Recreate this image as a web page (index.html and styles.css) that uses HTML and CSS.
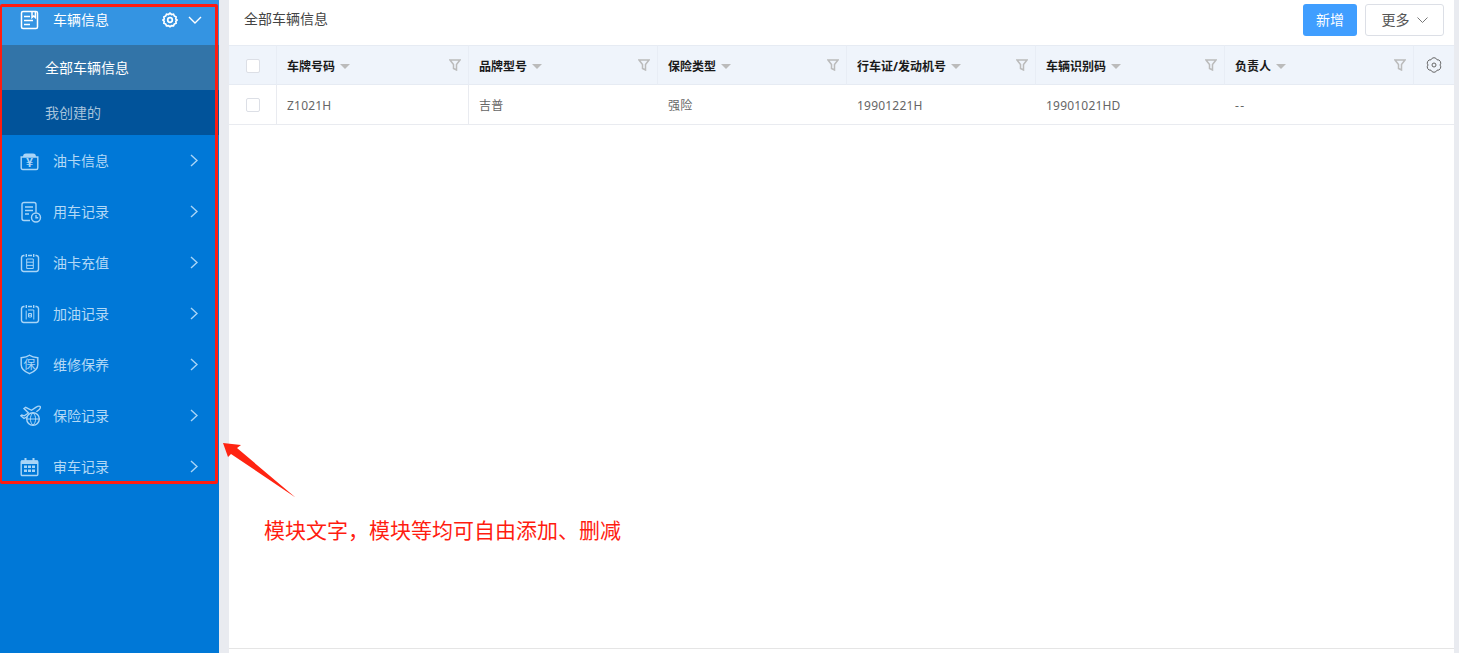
FILE: index.html
```html
<!DOCTYPE html>
<html lang="zh-CN">
<head>
<meta charset="utf-8">
<title>全部车辆信息</title>
<link rel="stylesheet" href="styles.css">
</head>
<body>
<aside class="sidebar">
  <div class="menu">
    <div class="row row-open">
      <span class="ico"><svg width="20" height="20" viewBox="0 0 20 20"><rect x="1.500" y="1.500" width="16" height="17" rx="1.500"/><path d="M4 6.500h6M4 10.500h9M4 14.500h6M12 1.500v6l1.700-1.500 1.700 1.500v-6"/></svg></span>
      <span class="label">车辆信息</span>
      <svg class="gear" width="16" height="16" viewBox="0 0 16 16"><path d="M8 1.200l1.500 1.300 2-.3.8 1.800 1.800.9-.3 2L15 8l-1.200 1.300.3 1.900-1.800.9-.8 1.800-2-.2L8 14.800l-1.500-1.100-2 .2-.8-1.800-1.800-.9.3-1.900L1 8l1.200-1.100-.3-2 1.800-.9.800-1.800 2 .3z"/><circle cx="8" cy="8" r="2.300"/></svg>
      <svg class="chev-down" width="14" height="8" viewBox="0 0 14 8"><path d="M1 1l6 6 6-6"/></svg>
    </div>
    <div class="sub sub-active">全部车辆信息</div>
    <div class="sub sub-idle">我创建的</div>

    <div class="row">
      <span class="ico"><svg width="20" height="20" viewBox="0 0 20 20"><path class="ico-fill" d="M3 6c0-2.500 1-3.500 3-3.500h7c2 0 3 1 3 3.500z"/><path d="M1.200 6h16.600v11a1.500 1.500 0 0 1-1.500 1.500H2.700a1.500 1.500 0 0 1-1.500-1.500z"/><text x="9.500" y="16.200" class="ico-text">¥</text></svg></span>
      <span class="label">油卡信息</span>
      <svg class="chev" width="8" height="13" viewBox="0 0 8 13"><path d="M1 1l6 5.500-6 5.500"/></svg>
    </div>
    <div class="row">
      <span class="ico"><svg width="22" height="22" viewBox="0 0 22 22"><path d="M10 19.500H4a2 2 0 0 1-2-2V3.500a2 2 0 0 1 2-2h10a2 2 0 0 1 2 2v8"/><path d="M5 6h8M5 9.500h8M5 13h4"/><circle cx="16" cy="16.500" r="4.500"/><path d="M16 14v2.700h2.200"/></svg></span>
      <span class="label">用车记录</span>
      <svg class="chev" width="8" height="13" viewBox="0 0 8 13"><path d="M1 1l6 5.500-6 5.500"/></svg>
    </div>
    <div class="row">
      <span class="ico"><svg width="20" height="20" viewBox="0 0 20 20"><path d="M4.500 2.500H3.500a2.500 2.500 0 0 0-2 2v12a2.500 2.500 0 0 0 2 2h13a2.500 2.500 0 0 0 2-2v-12a2.500 2.500 0 0 0-2-2h-1M8 2.500h4M6.300 1v3M13.700 1v3"/><path class="ico-thin" d="M6.700 6h6.600v9.500H6.700zM6.700 9.200h6.600M6.700 12.400h6.600"/></svg></span>
      <span class="label">油卡充值</span>
      <svg class="chev" width="8" height="13" viewBox="0 0 8 13"><path d="M1 1l6 5.500-6 5.500"/></svg>
    </div>
    <div class="row">
      <span class="ico"><svg width="20" height="20" viewBox="0 0 20 20"><path d="M4.500 2.500H3.500a2.500 2.500 0 0 0-2 2v12a2.500 2.500 0 0 0 2 2h13a2.500 2.500 0 0 0 2-2v-12a2.500 2.500 0 0 0-2-2h-1M8 2.500h4M6.300 1v3M13.700 1v3"/><path class="ico-thin" d="M6.200 15.500V6.500M8 6h5.800v9.500M8.500 9.500h3v3.500h-3zM8.500 11.200h3"/></svg></span>
      <span class="label">加油记录</span>
      <svg class="chev" width="8" height="13" viewBox="0 0 8 13"><path d="M1 1l6 5.500-6 5.500"/></svg>
    </div>
    <div class="row">
      <span class="ico"><svg width="20" height="21" viewBox="0 0 20 21"><path d="M9.500 1.200c2 1.500 5 2.300 8.300 2.500v7c0 4-3.500 7-8.300 9-4.800-2-8.300-5-8.300-9v-7c3.300-.2 6.300-1 8.300-2.500z"/><text x="9.500" y="15" class="ico-text ico-text-big">保</text></svg></span>
      <span class="label">维修保养</span>
      <svg class="chev" width="8" height="13" viewBox="0 0 8 13"><path d="M1 1l6 5.500-6 5.500"/></svg>
    </div>
    <div class="row">
      <span class="ico"><svg width="21" height="21" viewBox="0 0 21 21"><path d="M7.500 11.500L4 13.500 .8 10.800l1-.8 2.500.8 4.200-2.800L4 3.500l1.700-1.200 5.800 3 4.300-2.900c1.500-.9 3.800-1.400 4.400-.8.600.7-.2 2.500-1.800 3.700l-2 1.500"/><circle cx="13" cy="14" r="6.300"/><path class="ico-thin" d="M6.700 14h12.600M13 7.700c-3.500 3.500-3.500 9 0 12.600M13 7.700c3.500 3.500 3.500 9 0 12.600"/></svg></span>
      <span class="label">保险记录</span>
      <svg class="chev" width="8" height="13" viewBox="0 0 8 13"><path d="M1 1l6 5.500-6 5.500"/></svg>
    </div>
    <div class="row">
      <span class="ico"><svg width="20" height="20" viewBox="0 0 20 20"><path class="ico-fill" d="M1 3.500h3.500V1h2v2.500h6V1h2v2.500H18V7H1z"/><rect x="1.200" y="4" width="16.600" height="14.500" rx="1"/><path class="ico-fill" d="M4 8.500h3V11H4zM8 8.500h3V11H8zM12 8.500h3V11h-3zM4 12.500h3V15H4zM8 12.500h3V15H8zM12 12.500h3V15h-3z"/></svg></span>
      <span class="label">审车记录</span>
      <svg class="chev" width="8" height="13" viewBox="0 0 8 13"><path d="M1 1l6 5.500-6 5.500"/></svg>
    </div>
  </div>
</aside>

<main class="main">
  <header class="topbar">
    <h1 class="title">全部车辆信息</h1>
    <div class="actions">
      <button class="btn btn-primary">新增</button>
      <button class="btn btn-more">更多<svg width="11" height="6" viewBox="0 0 11 6"><path d="M.5.500l5 5 5-5"/></svg></button>
    </div>
  </header>

  <div class="table">
    <div class="cell head center b-r"><span class="check"></span></div>
    <div class="cell head b-r"><span class="th">车牌号码</span><i class="caret"></i><svg class="filter" width="12" height="12" viewBox="0 0 12 12"><path d="M1 1h10L7.500 5.500V11l-3-1.500v-4z"/></svg></div>
    <div class="cell head b-r"><span class="th">品牌型号</span><i class="caret"></i><svg class="filter" width="12" height="12" viewBox="0 0 12 12"><path d="M1 1h10L7.500 5.500V11l-3-1.500v-4z"/></svg></div>
    <div class="cell head b-r"><span class="th">保险类型</span><i class="caret"></i><svg class="filter" width="12" height="12" viewBox="0 0 12 12"><path d="M1 1h10L7.500 5.500V11l-3-1.500v-4z"/></svg></div>
    <div class="cell head b-r"><span class="th">行车证/发动机号</span><i class="caret"></i><svg class="filter" width="12" height="12" viewBox="0 0 12 12"><path d="M1 1h10L7.500 5.500V11l-3-1.500v-4z"/></svg></div>
    <div class="cell head b-r"><span class="th">车辆识别码</span><i class="caret"></i><svg class="filter" width="12" height="12" viewBox="0 0 12 12"><path d="M1 1h10L7.500 5.500V11l-3-1.500v-4z"/></svg></div>
    <div class="cell head b-r"><span class="th">负责人</span><i class="caret"></i><svg class="filter" width="12" height="12" viewBox="0 0 12 12"><path d="M1 1h10L7.500 5.500V11l-3-1.500v-4z"/></svg></div>
    <div class="cell head center"><svg class="head-gear" width="16" height="16" viewBox="0 0 16 16"><path d="M14 8A3.200 3.200 0 0 1 11 13.200A3.200 3.200 0 0 1 5 13.200A3.200 3.200 0 0 1 2 8A3.200 3.200 0 0 1 5 2.800A3.200 3.200 0 0 1 11 2.800A3.200 3.200 0 0 1 14 8z"/><circle cx="8" cy="8" r="2"/></svg></div>

    <div class="cell body center b-r"><span class="check"></span></div>
    <div class="cell body b-r">Z1021H</div>
    <div class="cell body">吉普</div>
    <div class="cell body">强险</div>
    <div class="cell body">19901221H</div>
    <div class="cell body">19901021HD</div>
    <div class="cell body dash">--</div>
    <div class="cell body"></div>
  </div>

  <div class="spacer"></div>
  <div class="foot"></div>
</main>

<div class="red-box"></div>
<svg class="red-arrow" width="80" height="62" viewBox="0 0 80 62"><polygon points="0,1 18,3 14,6 72.500,55.500 8,12 5,15"/></svg>
<p class="note">模块文字，模块等均可自由添加、删减</p>
</body>
</html>
```

FILE: styles.css
```css
* { box-sizing: border-box; }

html, body { height: 100%; }

body {
  margin: 0;
  display: flex;
  height: 653px;
  overflow: hidden;
  background: #e9ebf0;
  font-family: "Noto Sans", "Noto Sans CJK SC", sans-serif;
  position: relative;
}

.sidebar {
  width: 219px;
  flex: none;
  background: #0078d7;
  overflow: hidden;
}

.menu {
  margin-top: -6px;
}

.row {
  height: 51px;
  display: flex;
  align-items: center;
  padding: 0 21px 0 20px;
  color: #b3d9f6;
  font-size: 14px;
}

.row-open {
  background: #3494e2;
  color: #fff;
  padding-right: 17px;
}

.ico {
  width: 33px;
  flex: none;
  display: flex;
  align-items: center;
}

.ico svg {
  fill: none;
  stroke: #a9d5f7;
  stroke-width: 1.4;
  display: block;
}

.row-open .ico svg { stroke: #fff; stroke-width: 1.5; }

.ico svg .ico-thin { stroke-width: 1; }

.ico svg .ico-text {
  fill: #a9d5f7;
  stroke: none;
  font-size: 12px;
  font-weight: 700;
  font-family: "Noto Sans CJK SC", sans-serif;
  text-anchor: middle;
}

.ico svg .ico-text-big { font-size: 12px; font-weight: 400; }

.ico svg .ico-fill { fill: #a9d5f7; stroke: none; }

.label {
  flex: 1;
  padding-bottom: 2px;
}

.gear {
  fill: none;
  stroke: #fff;
  stroke-width: 1.7;
  margin-right: 10px;
}

.chev-down {
  fill: none;
  stroke: #fff;
  stroke-width: 1.4;
}

.chev {
  fill: none;
  stroke: #a9d5f7;
  stroke-width: 1.4;
}

.sub {
  height: 45px;
  display: flex;
  align-items: center;
  padding: 0 0 2px 45px;
  font-size: 14px;
}

.sub-active { background: #3274a8; color: #fff; }
.sub-idle { background: #01539a; color: #a8c4dc; }

.main {
  flex: 1;
  margin: 0 5px 0 10px;
  background: #fff;
  display: flex;
  flex-direction: column;
  min-width: 0;
}

.topbar {
  height: 45px;
  flex: none;
  display: flex;
  align-items: flex-start;
  justify-content: space-between;
  padding: 4px 10px 0 15px;
}

.title {
  margin: -1px 0 0;
  font-size: 14px;
  font-weight: 400;
  color: #444;
  line-height: 32px;
}

.actions {
  display: flex;
  gap: 8px;
}

.btn {
  height: 32px;
  border-radius: 3px;
  font: inherit;
  font-size: 14px;
  padding: 0 0 2px;
  display: flex;
  align-items: center;
  justify-content: center;
}

.btn-primary {
  width: 54px;
  background: #409eff;
  border: 0;
  color: #fff;
}

.btn-more {
  width: 79px;
  background: #fff;
  border: 1px solid #dcdfe6;
  color: #555;
  gap: 7px;
}

.btn-more svg {
  fill: none;
  stroke: #777;
  stroke-width: 1;
  margin-top: 2px;
}

.table {
  display: grid;
  grid-template-columns: 48px 192px 189px 189px 189px 189px 189px 40px;
  grid-template-rows: 40px 40px;
  flex: none;
}

.cell {
  display: flex;
  align-items: center;
  padding: 0 10px;
  font-size: 12px;
  min-width: 0;
}

.center { justify-content: center; }

.head {
  background: #eff4fb;
  border-top: 1px solid #e6ebf3;
  border-bottom: 1px solid #e6ebf3;
  color: #1a1a1a;
  font-weight: 500;
  padding-top: 2px;
}

.head.b-r { border-right: 1px solid #e8edf5; }

.body {
  border-bottom: 1px solid #e9ebf0;
  color: #666;
  letter-spacing: .2px;
  padding-top: 1px;
}

.body.b-r { border-right: 1px solid #e9ebf0; }

.cell.center { padding-left: 0; padding-right: 0; }

.dash { letter-spacing: 1.500px; }

.th { white-space: nowrap; font-weight: 700; }

.caret {
  width: 0;
  height: 0;
  margin-left: 5px;
  margin-top: 1px;
  border-left: 5px solid transparent;
  border-right: 5px solid transparent;
  border-top: 5px solid #bbb;
}

.filter {
  margin-left: auto;
  fill: none;
  stroke: #bbb;
  stroke-width: 1.5;
  flex: none;
  margin-right: -3px;
  margin-top: -3px;
}

.head-gear {
  fill: none;
  stroke: #666;
  stroke-width: 1;
  margin-top: -2px;
}

.check {
  width: 14px;
  height: 14px;
  background: #fff;
  border: 1px solid #dcdfe6;
  border-radius: 2px;
}

.spacer { flex: 1; }

.foot {
  height: 5px;
  flex: none;
  border-top: 1px solid #e5e5e5;
}

.red-box {
  position: absolute;
  left: 0;
  top: 4px;
  width: 218px;
  height: 480px;
  border: 3px solid #ff1c10;
  border-left-width: 2px;
  border-radius: 2px;
  pointer-events: none;
}

.red-arrow {
  position: absolute;
  left: 223px;
  top: 442px;
  fill: #ff2412;
}

.note {
  position: absolute;
  left: 264px;
  top: 514px;
  margin: 0;
  font-size: 21px;
  line-height: 30px;
  color: #ff1c10;
  font-family: "Noto Sans CJK SC", sans-serif;
  font-weight: 400;
  white-space: nowrap;
}
```
